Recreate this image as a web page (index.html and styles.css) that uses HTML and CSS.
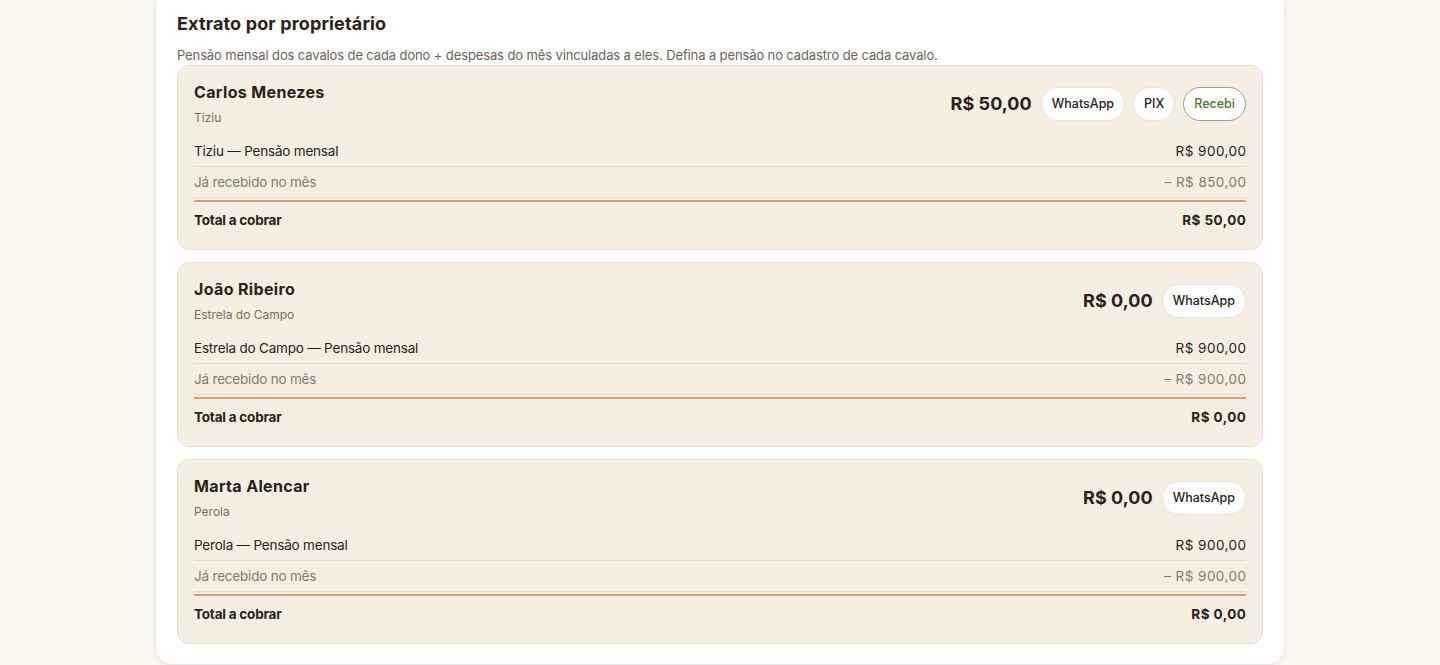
FILE: index.html
```html
<!DOCTYPE html>
<html lang="pt-BR">
<head>
<meta charset="utf-8">
<title>Extrato por proprietário</title>
<link rel="stylesheet" href="styles.css">
</head>
<body>
<div class="page">
  <section class="panel">
    <h2 class="title">Extrato por proprietário</h2>
    <p class="subtitle">Pensão mensal dos cavalos de cada dono + despesas do mês vinculadas a eles. Defina a pensão no cadastro de cada cavalo.</p>

    <div class="owner">
      <div class="owner-head">
        <div class="owner-info">
          <div class="owner-name">Carlos Menezes</div>
          <div class="owner-horses">Tiziu</div>
        </div>
        <div class="owner-actions">
          <span class="owner-amount">R$ 50,00</span>
          <button class="pill">WhatsApp</button>
          <button class="pill">PIX</button>
          <button class="pill pill-ok">Recebi</button>
        </div>
      </div>
      <div class="line"><span>Tiziu — Pensão mensal</span><span class="num">R$ 900,00</span></div>
      <div class="line line-muted"><span>Já recebido no mês</span><span class="num">– R$ 850,00</span></div>
      <div class="line line-total"><span>Total a cobrar</span><span class="num">R$ 50,00</span></div>
    </div>

    <div class="owner">
      <div class="owner-head">
        <div class="owner-info">
          <div class="owner-name">João Ribeiro</div>
          <div class="owner-horses">Estrela do Campo</div>
        </div>
        <div class="owner-actions">
          <span class="owner-amount">R$ 0,00</span>
          <button class="pill">WhatsApp</button>
        </div>
      </div>
      <div class="line"><span>Estrela do Campo — Pensão mensal</span><span class="num">R$ 900,00</span></div>
      <div class="line line-muted"><span>Já recebido no mês</span><span class="num">– R$ 900,00</span></div>
      <div class="line line-total"><span>Total a cobrar</span><span class="num">R$ 0,00</span></div>
    </div>

    <div class="owner">
      <div class="owner-head">
        <div class="owner-info">
          <div class="owner-name">Marta Alencar</div>
          <div class="owner-horses">Perola</div>
        </div>
        <div class="owner-actions">
          <span class="owner-amount">R$ 0,00</span>
          <button class="pill">WhatsApp</button>
        </div>
      </div>
      <div class="line"><span>Perola — Pensão mensal</span><span class="num">R$ 900,00</span></div>
      <div class="line line-muted"><span>Já recebido no mês</span><span class="num">– R$ 900,00</span></div>
      <div class="line line-total"><span>Total a cobrar</span><span class="num">R$ 0,00</span></div>
    </div>
  </section>
</div>
</body>
</html>
```

FILE: styles.css
```css
* { box-sizing: border-box; }

html, body {
  margin: 0;
  padding: 0;
  background: #f9f6ef;
  font-family: "Inter", "Liberation Sans", sans-serif;
  color: #2b2118;
}

.page {
  display: flex;
  justify-content: center;
}

.panel {
  width: 1130px;
  background: #ffffff;
  border: 1px solid #ede6da;
  border-top: none;
  border-radius: 0 0 16px 16px;
  box-shadow: 0 2px 10px rgba(120, 100, 70, 0.06);
  padding: 12px 21px 20px;
  margin-bottom: 2px;
}

.title {
  margin: 0;
  font-size: 18px;
  line-height: 24px;
  font-weight: 700;
  letter-spacing: 0.15px;
  color: #2b2118;
}

.subtitle {
  margin: 10px 0 1px;
  font-size: 13px;
  line-height: 18px;
  color: #6f6257;
  letter-spacing: -0.12px;
}

.owner {
  background: #f5efe3;
  border: 1px solid #e8dfd0;
  border-radius: 12px;
  padding: 15px 16px 15px;
  margin-bottom: 12px;
}
.owner:last-child { margin-bottom: 0; }

.owner-head {
  display: flex;
  justify-content: space-between;
  align-items: center;
  margin-bottom: 10px;
}

.owner-name {
  font-size: 16px;
  line-height: 22px;
  font-weight: 700;
  letter-spacing: 0.35px;
}

.owner-horses {
  margin-top: 7px;
  font-size: 12px;
  line-height: 16px;
  color: #7a6d60;
}

.owner-actions {
  display: flex;
  align-items: center;
  gap: 8px;
}

.owner-amount {
  font-size: 18px;
  font-weight: 700;
  margin-right: 1px;
  letter-spacing: 0.05px;
}

.pill {
  height: 34px;
  padding: 0 10px;
  border-radius: 17px;
  border: 1px solid #ebe3d6;
  background: #ffffff;
  font-family: inherit;
  font-size: 12.5px;
  font-weight: 500;
  color: #2b2118;
  letter-spacing: 0;
}

.pill-ok {
  border-color: #9aa57f;
  color: #4f7a2e;
}

.line {
  display: flex;
  justify-content: space-between;
  font-size: 13.5px;
  line-height: 18px;
  padding: 6px 0;
  border-bottom: 1px solid #e6dccb;
  letter-spacing: -0.2px;
}

.line .num {
  letter-spacing: 0.45px;
  margin-right: -0.45px;
}

.line-muted {
  color: #85786b;
}

.line-total {
  border-bottom: none;
  border-top: 2px solid #d6a06f;
  margin-top: 2px;
  padding: 9px 0 5px;
  font-weight: 700;
  font-size: 13.5px;
}
```
